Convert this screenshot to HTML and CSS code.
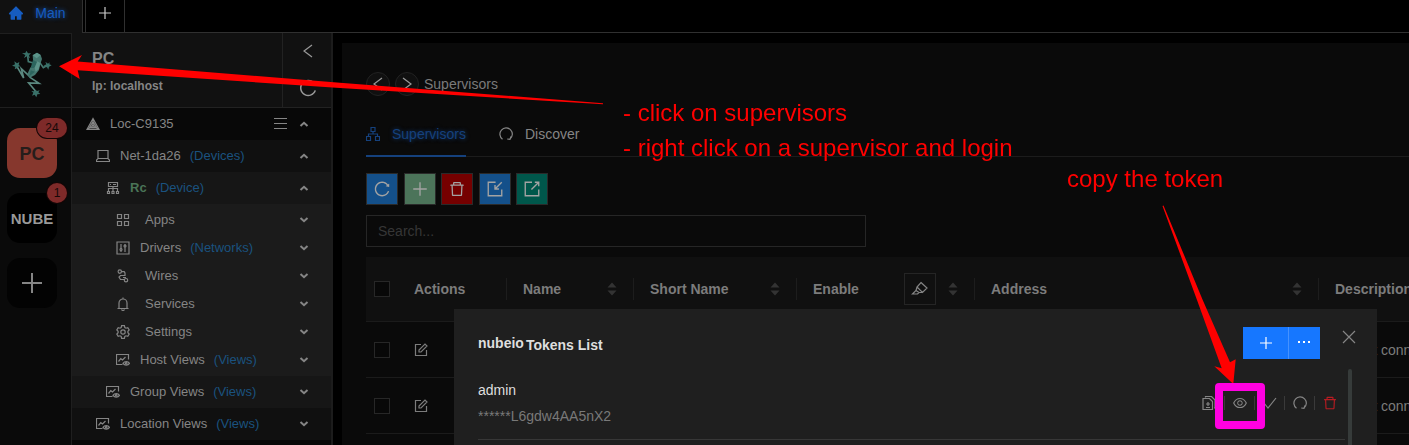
FILE: index.html
```html
<!DOCTYPE html>
<html lang="en">
<head>
<meta charset="utf-8">
<title>Supervisors</title>
<link rel="stylesheet" href="styles.css">
</head>
<body>
<svg class="defs" aria-hidden="true">
  <symbol id="plus" viewBox="0 0 16 16"><path d="M8 2v12M2 8h12"/></symbol>
  <symbol id="left" viewBox="0 0 16 16"><path d="M12 2 4 8l8 6"/></symbol>
  <symbol id="right" viewBox="0 0 16 16"><path d="M4 2l8 6-8 6"/></symbol>
  <symbol id="up" viewBox="0 0 10 10"><path d="M1.500 7 5 3.800 8.500 7"/></symbol>
  <symbol id="down" viewBox="0 0 10 10"><path d="M1.500 3 5 6.200 8.500 3"/></symbol>
  <symbol id="reload" viewBox="0 0 1024 1024"><path class="fill" d="M909.1 209.3l-56.4 44.1C775.8 155.1 656.2 92 521.9 92 290 92 102.3 279.5 102 511.5 101.7 743.7 289.8 932 521.9 932c181.3 0 335.8-115 394.6-276.1 1.5-4.2-.7-8.9-4.9-10.3l-56.7-19.5a8 8 0 0 0-10.1 4.8c-1.8 5-3.8 10-5.9 14.9-17.3 41-42.1 77.8-73.7 109.4A344.77 344.77 0 0 1 655.9 829c-42.3 17.9-87.4 27-133.8 27-46.5 0-91.5-9.1-133.8-27A341.5 341.5 0 0 1 279 755.2a342.16 342.16 0 0 1-73.7-109.4c-17.9-42.4-27-87.4-27-133.9s9.1-91.5 27-133.9c17.3-41 42.1-77.8 73.7-109.4 31.6-31.6 68.4-56.4 109.3-73.8 42.3-17.9 87.4-27 133.8-27 46.5 0 91.5 9.1 133.8 27a341.5 341.5 0 0 1 109.3 73.8c9.9 9.9 19.2 20.4 27.8 31.4l-60.2 47a8 8 0 0 0 3 14.1l175.6 43c5 1.2 9.9-2.6 9.9-7.7l.8-180.9c-.1-6.6-7.8-10.3-13-6.2z"/></symbol>
  <symbol id="redo" viewBox="1 1 14 14"><path d="M4.500 13.200A6.200 6.200 0 1 1 12 13M13 10.400l-1 2.900-2.800-.3"/></symbol>
  <symbol id="trash" viewBox="0 0 1024 1024"><path class="fill" d="M360 184h-8c4.400 0 8-3.600 8-8v8h304v-8c0 4.400 3.600 8 8 8h-8v72h72v-80c0-35.300-28.700-64-64-64H352c-35.300 0-64 28.700-64 64v80h72v-72zm504 72H160c-17.700 0-32 14.300-32 32v32c0 4.400 3.600 8 8 8h60.400l24.700 523c1.600 34.100 29.800 61 63.900 61h454c34.200 0 62.300-26.800 63.900-61l24.700-523H888c4.400 0 8-3.600 8-8v-32c0-17.700-14.300-32-32-32zM731.300 840H292.700l-24.200-512h487l-24.200 512z"/></symbol>
  <symbol id="import" viewBox="0 0 16 16"><path d="M8.500 2H2v12h12V8.500M14 2 8 8M8 4.500V8h3.500"/></symbol>
  <symbol id="export" viewBox="0 0 16 16"><path d="M8 2H2v12h12V8.500M7.500 8.500 14 2M10.500 2H14v3.500"/></symbol>
  <symbol id="edit" viewBox="0 0 14 14"><path d="M7 1.500H1.500v11h11V7M5 9V7l6-6 2 2-6 6z"/></symbol>
  <symbol id="site" viewBox="0 0 14 14"><path d="M7 1.500.900 12.500h12.200zM7 4.500 3.300 11h7.400zM7 7.500 5.500 10h3zM7 1.500v6M1 12.500l4.500-2.500M13 12.500 8.500 10"/></symbol>
  <symbol id="laptop" viewBox="0 0 14 14"><path d="M2 9.500v-8h10v8M2 9.500h10l1.500 1.500v1.500H.500V11z"/></symbol>
  <symbol id="cluster" viewBox="0 0 14 14"><path d="M2.500 1.500h9v4h-9zM4 3.500h1M7 3.500h3M7 5.500V10M2.500 10V7.500h9V10M1.500 10.500h2v2h-2zM6 10.500h2v2H6zM10.500 10.500h2v2h-2z"/></symbol>
  <symbol id="apps" viewBox="0 0 14 14"><path d="M1.500 1.500h4v4h-4zM8.500 1.500h4v4h-4zM1.500 8.500h4v4h-4zM8.500 8.500h4v4h-4z"/></symbol>
  <symbol id="control" viewBox="0 0 14 14"><path d="M1 1h12v12H1zM5 3v5M5 9.500V11M9 3v1.500M9 6v5"/><circle cx="5" cy="8.500" r="1"/><circle cx="9" cy="5" r="1"/></symbol>
  <symbol id="wires" viewBox="0 0 14 14"><circle cx="3.800" cy="2.600" r="1.700"/><circle cx="10" cy="11.200" r="1.700"/><path d="M5.500 2.600h2.700L9 4v2.500H4.500L3 8l1.500 2.500h3.800M7 8.500h3"/></symbol>
  <symbol id="bell" viewBox="0 0 14 14"><path d="M1.500 11.500h11M3 11.500V6a4 4 0 0 1 8 0v5.500M7 .500V2M5.500 12.500c.5 1.300 2.500 1.300 3 0"/></symbol>
  <symbol id="gear" viewBox="0 0 14 14"><path d="M5.600 .700h2.800l.4 1.800 1.200.7 1.800-.6 1.400 2.400L11.900 6.300v1.400l1.300 1.300-1.400 2.400-1.800-.6-1.200.7-.4 1.800H5.600l-.4-1.800-1.200-.7-1.800.6L.800 9l1.300-1.300V6.300L.8 5l1.400-2.400 1.800.6 1.200-.7z"/><circle cx="7" cy="7" r="2.200"/></symbol>
  <symbol id="views" viewBox="0 0 14 14"><path d="M6.500 11.500h-6v-10h12v5M2.500 8.500l2.300-2.800 1.700 1.300L9.500 4M7 10.300c1.500-2.300 5-2.300 6.500 0-1.500 2.300-5 2.300-6.500 0z"/><circle cx="10.200" cy="10.300" r=".8"/></symbol>
  <symbol id="org" viewBox="0 0 14 14"><path d="M5 .500h4v4H5zM.500 9.500h4v4h-4zM9.500 9.500h4v4h-4zM7 4.500V7M2.500 9.500V7h9v2.500"/></symbol>
  <symbol id="sort" viewBox="0 0 10 14"><path class="fill" d="M5 .500 9.500 5.500h-9zM.500 8.500h9L5 13.500z"/></symbol>
  <symbol id="doc" viewBox="0 0 14 14"><path d="M3.500 1.500V.500h6l3.500 3.500V12h-1M1 2.500h6.500L10.500 5.500v8H1zM4 8h4M6 6v4M4 11.500h4"/></symbol>
  <symbol id="eye" viewBox="0 0 1024 1024"><path class="fill" d="M942.200 486.200C847.400 286.500 704.100 186 512 186c-192.200 0-335.400 100.500-430.200 300.300a60.300 60.300 0 0 0 0 51.500C176.600 737.500 319.900 838 512 838c192.200 0 335.400-100.500 430.200-300.300 7.700-16.200 7.700-35 0-51.500zM512 766c-161.300 0-279.400-81.800-362.700-254C232.600 339.800 350.700 258 512 258c161.300 0 279.400 81.800 362.700 254C791.500 684.200 673.400 766 512 766zm-4-430c-97.200 0-176 78.800-176 176s78.800 176 176 176 176-78.800 176-176-78.800-176-176-176zm0 288c-61.900 0-112-50.100-112-112s50.100-112 112-112 112 50.100 112 112-50.100 112-112 112z"/></symbol>
</svg>

<header class="topbar">
  <button class="tab-main"><svg class="i16" viewBox="0 0 1024 1024"><path class="fill" d="M946.500 505L534.600 93.400a31.930 31.930 0 0 0-45.200 0L77.500 505c-12 12-18.800 28.300-18.800 45.300 0 35.300 28.700 64 64 64h43.400V908c0 17.700 14.300 32 32 32H448V716h112v224h265.900c17.700 0 32-14.300 32-32V614.300h43.400c17 0 33.300-6.700 45.300-18.800 24.900-25 24.900-65.500-.1-90.500z"/></svg><span>Main</span></button>
  <span class="topgap"></span>
  <button class="tab-add" aria-label="Add tab"><svg class="i16"><use href="#plus"/></svg></button>
  <span class="toprest"></span>
</header>

<div class="shell">
  <nav class="rail">
    <a class="logo" href="#" aria-label="Home">
      <svg class="frog" viewBox="36 150 120 144">
        <path fill="none" stroke="#44776f" stroke-width="5" d="M100 189 85 185 83 166M118 186l12 17 12-7"/>
        <path fill="none" stroke="#5b8980" stroke-width="5" d="M92 232 64 206l7 28-20-34M90 232l27 18-31-1 23 27"/>
        <path fill="#44776f" d="M98 166l13-8 11 7 4 12-5 15-4 18-12 15-17 9-6-12 8-17 10-14z"/>
        <path fill="#5c948a" d="M98 166l13-8 11 7-12 10z"/>
        <path fill="#2c655e" d="M99 179l12 8-8 17-11 0zM92 211l13 4-17 14z"/>
        <path fill="#5c948a" d="M112 184l9 5-5 18-9 8-3-12z"/>
        <path fill="#397068" d="M81 169l-9 5 4-9-10-5 10-1 3-7 5 8 9 0-6 6 3 9zM137 201l-7-3 9-5-3-8 8 6 5-4-1 6 7 3-8 4-2 9-4-7zM51 205l-7 3 2-8-10-3 9-4-2-9 8 6 7-4-2 9 6 4-7 1zM105 270l6 3 8-2-4 6 6 5-9 1-3 9-5-8-8 3 4-9-6-5 8 1z"/>
      </svg>
    </a>
    <div class="hosts">
      <a class="host pc" href="#">PC<span class="badge wide">24</span></a>
      <a class="host nube" href="#">NUBE<span class="badge">1</span></a>
      <button class="host add" aria-label="Add host"><svg class="i24" viewBox="0 0 24 24"><path d="M12 2v20M2 12h20"/></svg></button>
    </div>
  </nav>

  <aside class="panel">
    <div class="panel-head">
      <div class="panel-title"><strong>PC</strong><span>Ip: localhost</span></div>
      <div class="panel-tools">
        <button aria-label="Collapse"><svg class="i16"><use href="#left"/></svg></button>
        <button aria-label="Reload"><svg class="i20"><use href="#reload"/></svg></button>
      </div>
    </div>
    <ul class="tree">
      <li class="row l0"><svg class="i14"><use href="#site"/></svg><span>Loc-C9135</span><button class="menu" aria-label="Menu"><svg class="i14" viewBox="0 0 14 14"><path d="M0 1.500h13M0 6.500h13M0 11.500h13"/></svg></button><button class="chev" aria-label="Collapse"><svg><use href="#up"/></svg></button></li>
      <li class="row l1"><svg class="i14"><use href="#laptop"/></svg><span>Net-1da26</span><em>(Devices)</em><button class="chev" aria-label="Collapse"><svg><use href="#up"/></svg></button></li>
      <li class="row l2"><svg class="i14"><use href="#cluster"/></svg><b>Rc</b><em>(Device)</em><button class="chev" aria-label="Collapse"><svg><use href="#up"/></svg></button></li>
      <li class="branch"><ul>
        <li class="row l3 item"><svg class="i14"><use href="#apps"/></svg><span>Apps</span><button class="chev" aria-label="Expand"><svg><use href="#down"/></svg></button></li>
        <li class="row l3"><svg class="i14"><use href="#control"/></svg><span>Drivers</span><em>(Networks)</em><button class="chev" aria-label="Expand"><svg><use href="#down"/></svg></button></li>
        <li class="row l3 item"><svg class="i14"><use href="#wires"/></svg><span>Wires</span><button class="chev" aria-label="Expand"><svg><use href="#down"/></svg></button></li>
        <li class="row l3 item"><svg class="i14"><use href="#bell"/></svg><span>Services</span><button class="chev" aria-label="Expand"><svg><use href="#down"/></svg></button></li>
        <li class="row l3 item"><svg class="i14"><use href="#gear"/></svg><span>Settings</span><button class="chev" aria-label="Expand"><svg><use href="#down"/></svg></button></li>
        <li class="row l3"><svg class="i14"><use href="#views"/></svg><span>Host Views</span><em>(Views)</em><button class="chev" aria-label="Expand"><svg><use href="#down"/></svg></button></li>
      </ul></li>
      <li class="row l2"><svg class="i14"><use href="#views"/></svg><span>Group Views</span><em>(Views)</em><button class="chev" aria-label="Expand"><svg><use href="#down"/></svg></button></li>
      <li class="row l1"><svg class="i14"><use href="#views"/></svg><span>Location Views</span><em>(Views)</em><button class="chev" aria-label="Expand"><svg><use href="#down"/></svg></button></li>
    </ul>
  </aside>

  <main class="content">
    <div class="crumbs">
      <button aria-label="Back"><svg class="i16"><use href="#left"/></svg></button>
      <button aria-label="Forward"><svg class="i16"><use href="#right"/></svg></button>
      <span>Supervisors</span>
    </div>
    <div class="tabs">
      <button class="active"><svg class="i14"><use href="#org"/></svg><span>Supervisors</span></button>
      <button><svg class="i14"><use href="#redo"/></svg><span>Discover</span></button>
    </div>
    <div class="actions">
      <button class="blue" aria-label="Refresh"><svg class="i18"><use href="#reload"/></svg></button>
      <button class="green" aria-label="Add"><svg class="i18"><use href="#plus"/></svg></button>
      <button class="red" aria-label="Delete"><svg class="i18"><use href="#trash"/></svg></button>
      <button class="blue" aria-label="Import"><svg class="i18"><use href="#import"/></svg></button>
      <button class="teal" aria-label="Export"><svg class="i18"><use href="#export"/></svg></button>
    </div>
    <input class="search" type="text" placeholder="Search..." aria-label="Search">
    <div class="table-wrap">
      <table>
        <colgroup><col class="c-check"><col class="c-act"><col class="c-name"><col class="c-short"><col class="c-enable"><col class="c-addr"><col class="c-desc"></colgroup>
        <thead><tr>
          <th class="check"><input type="checkbox" aria-label="Select all"></th>
          <th class="split">Actions</th>
          <th class="split"><div class="th">Name<svg class="sort"><use href="#sort"/></svg></div></th>
          <th class="split"><div class="th">Short Name<svg class="sort"><use href="#sort"/></svg></div></th>
          <th class="split"><div class="th">Enable<button class="filter" aria-label="Highlight"><svg class="i18" viewBox="0 0 18 18"><path d="M10 2.500l6 5.500-4.500 4.500-5.500-5.500zM6 7 5 10.500l-3.500 3.500h5l1.500-1.500 3.500 0M5 10.500l3 2"/></svg></button><svg class="sort"><use href="#sort"/></svg></div></th>
          <th class="split"><div class="th">Address<svg class="sort"><use href="#sort"/></svg></div></th>
          <th>Description</th>
        </tr></thead>
        <tbody>
          <tr><td class="check"><input type="checkbox" aria-label="Select row 1"></td><td><button class="edit" aria-label="Edit"><svg class="i14"><use href="#edit"/></svg></button></td><td></td><td></td><td></td><td></td><td>cannot connect</td></tr>
          <tr><td class="check"><input type="checkbox" aria-label="Select row 2"></td><td><button class="edit" aria-label="Edit"><svg class="i14"><use href="#edit"/></svg></button></td><td></td><td></td><td></td><td></td><td>cannot connect</td></tr>
        </tbody>
      </table>
    </div>
  </main>
</div>

<section class="modal" role="dialog" aria-label="Tokens List">
  <div class="modal-head">
    <h2><span>nubeio</span><span class="sub">Tokens List</span></h2>
    <div class="split-btn">
      <button aria-label="Add token"><svg class="i16"><use href="#plus"/></svg></button>
      <button class="more" aria-label="More"><svg class="i14" viewBox="0 0 14 14"><path class="fill" d="M1 6h2v2H1zM6 6h2v2H6zM11 6h2v2h-2z"/></svg></button>
    </div>
    <button class="close" aria-label="Close"><svg class="i16" viewBox="0 0 16 16"><path d="M2 2l12 12M14 2 2 14"/></svg></button>
  </div>
  <div class="modal-body">
    <div class="token">
      <div class="token-text"><span>admin</span><span class="value">******L6gdw4AA5nX2</span></div>
      <div class="token-actions">
        <button aria-label="Copy"><svg class="i14"><use href="#doc"/></svg></button>
        <button aria-label="Show"><svg class="i16"><use href="#eye"/></svg></button>
        <button aria-label="Approve"><svg class="i14" viewBox="0 0 14 14"><path d="M1 7l4 5 8-10"/></svg></button>
        <button aria-label="Regenerate"><svg class="i14"><use href="#redo"/></svg></button>
        <button class="danger" aria-label="Delete"><svg class="i16"><use href="#trash"/></svg></button>
      </div>
    </div>
    <span class="scrollbar"></span>
  </div>
</section>

<div class="notes">
  <svg class="arrows" width="1409" height="445">
    <path d="M59 66.300 82 55 77.700 61.500 340 82.700 603 103.300v1L340 88 77.700 70.300 79.700 79z"/>
    <path d="M1162.500 206 1163.500 205.500 1202.700 300 1230 362.300 1235.700 359.300 1233.300 384 1214.300 366.300 1221.700 368.300 1197 300z"/>
  </svg>
  <p class="note steps">- click on supervisors<br>- right click on a supervisor and login</p>
  <p class="note copy">copy the token</p>
  <span class="frame"></span>
</div>
</body>
</html>
```
FILE: styles.css
```css
* { box-sizing: border-box; }
body {
  margin: 0;
  height: 100vh;
  overflow: hidden;
  display: flex;
  flex-direction: column;
  background: #000;
  color: #858585;
  font-family: "Liberation Sans", Arial, sans-serif;
  font-size: 14px;
  line-height: 22px;
}
button {
  display: flex;
  align-items: center;
  justify-content: center;
  margin: 0;
  padding: 0;
  border: 0;
  background: none;
  color: inherit;
  font: inherit;
}
a { color: inherit; text-decoration: none; }
ul { list-style: none; margin: 0; padding: 0; }
svg { display: block; flex: none; fill: none; stroke: currentColor; stroke-width: 1.2; }
.fill { fill: currentColor; stroke: none; }
.defs { position: absolute; width: 0; height: 0; }
.i14 { width: 14px; height: 14px; }
.i16 { width: 16px; height: 16px; }
.i18 { width: 18px; height: 18px; }
.i20 { width: 20px; height: 20px; }
.i24 { width: 24px; height: 24px; stroke-width: 2; }

.topbar { display: flex; flex: none; height: 33px; }
.tab-main {
  width: 83px;
  padding: 0 8px 7px 0;
  gap: 11px;
  background: #111;
  border-right: 1px solid #303030;
  color: #165cc0;
  text-shadow: 0 0 4px #1557b8;
}
.topgap { width: 2px; border-bottom: 1px solid #303030; }
.tab-add {
  width: 40px;
  padding-bottom: 6px;
  border: solid #303030;
  border-width: 0 1px 1px;
  color: #ccc;
}
.toprest { flex: 1; border-bottom: 1px solid #303030; }

.shell { display: flex; flex: 1; min-height: 0; }
.rail { width: 72px; flex: none; background: #0a0a0a; border-right: 1px solid #1f1f1f; }
.logo { display: block; height: 75px; padding: 16px 0 0 12px; border-top: 1px solid #1f1f1f; border-bottom: 1px solid #1f1f1f; }
.frog { width: 40px; height: 48px; stroke: none; }
.hosts { display: flex; flex-direction: column; gap: 15px; padding: 20px 0 0 7px; }
.host {
  position: relative;
  display: flex;
  align-items: center;
  justify-content: center;
  width: 50px;
  height: 50px;
  border-radius: 13px;
  background: #000;
  font-weight: bold;
}
.host.pc { padding-top: 2px; background: #86372d; color: #261d1b; font-size: 18px; }
.host.nube { padding-top: 2px; font-size: 15px; color: #999; }
.host.add { background: #030303; }
.badge {
  position: absolute;
  top: -10px;
  right: -10px;
  min-width: 20px;
  height: 20px;
  border-radius: 10px;
  background: #7e2a29;
  box-shadow: 0 0 0 1px #130606;
  color: #160808;
  font-size: 12px;
  font-weight: normal;
  line-height: 20px;
  text-align: center;
}
.badge.wide { min-width: 30px; }

.panel { width: 261px; flex: none; background: #070707; border-right: 2px solid #1c1c1c; }
.panel-head { display: flex; height: 75px; background: #111; border-bottom: 1px solid #222; }
.panel-title { flex: 1; padding: 15px 0 0 20px; border-right: 1px solid #222; }
.panel-title strong { display: block; font-size: 16px; line-height: 22px; }
.panel-title span { display: block; padding-top: 5px; font-size: 12px; font-weight: bold; }
.panel-tools { display: flex; flex-direction: column; align-items: center; gap: 19px; width: 48px; padding: 10px 0 0 1px; color: #999; }
.row { display: flex; align-items: center; height: 32px; padding-right: 22px; font-size: 13px; }
.row > .i14 { margin-right: 10px; }
.row em { margin-left: 9px; color: #1a527f; font-style: normal; }
.row b { color: #4a7457; }
.row .chev { margin-left: auto; }
.row .menu { margin-left: auto; }
.row .menu + .chev { margin-left: 11px; }
.chev svg { width: 10px; height: 10px; stroke-width: 2; }
.l0 { padding-left: 14px; background: #080808; }
.l1 { padding-left: 24px; background: #101010; }
.l2 { padding-left: 34px; background: #161616; }
.l3 { padding-left: 44px; height: 28px; }
.row.item > .i14 { margin-right: 15px; }
.branch { padding: 2px 0; background: #1b1b1b; }

.content { flex: 1; min-width: 0; margin: 10px 0 0 9px; padding: 29px 0 0 24px; background: #0a0a0a; overflow: hidden; }
.crumbs { display: flex; align-items: center; gap: 5px; height: 24px; color: #7a7a7a; }
.crumbs button { width: 24px; height: 24px; border: 1px solid #222; border-radius: 12px; background: #101010; color: #999; }
.tabs { display: flex; gap: 33px; height: 61px; padding-top: 17px; border-bottom: 1px solid #1c1c1c; color: #858585; }
.tabs button { height: 44px; gap: 12px; border-bottom: 2px solid transparent; }
.tabs .active { color: #15417d; border-color: #15417d; text-shadow: 0 0 4px #153f77; }
.actions { display: flex; justify-content: space-between; width: 182px; margin-top: 16px; }
.actions button { width: 32px; height: 32px; border: 1px solid #2a2a2a; color: #a3a3a3; }
.actions .blue { background: #14508a; }
.actions .green { background: #4c745a; }
.actions .red { background: #750000; }
.actions .teal { background: #00574b; }
.search {
  display: block;
  width: 500px;
  height: 32px;
  margin-top: 10px;
  padding: 0 11px;
  border: 1px solid #262626;
  border-radius: 0;
  background: #0a0a0a;
  color: #858585;
  font: inherit;
}
.search::placeholder { color: #363636; }
.table-wrap { margin-top: 10px; overflow: hidden; }
table { width: 1253px; table-layout: fixed; border-collapse: separate; border-spacing: 0; }
.c-check { width: 32px; }
.c-act { width: 109px; }
.c-name { width: 127px; }
.c-short { width: 163px; }
.c-enable { width: 178px; }
.c-addr { width: 344px; }
th, td { padding: 0 17px 0 16px; border-bottom: 1px solid #1b1b1b; text-align: left; white-space: nowrap; }
th { height: 65px; background: #101010; color: #7c7c7c; }
th.split { background: linear-gradient(#1d1d1d, #1d1d1d) right center / 1px 22px no-repeat #101010; }
td { height: 56px; color: #7c7c7c; }
.check { padding: 0 8px; }
.check input { display: block; appearance: none; width: 16px; height: 16px; margin: 0; border: 1px solid #272727; background: #080808; }
.th { display: flex; align-items: center; }
.sort { width: 10px; height: 14px; margin-left: auto; color: #333; }
.filter { width: 32px; height: 32px; margin-left: auto; border: 1px solid #252525; color: #858585; }
.filter + .sort { margin-left: 12px; }

.modal {
  position: fixed;
  top: 309px;
  bottom: 0;
  left: 454px;
  right: 32px;
  padding: 18px 20px 0 24px;
  background: #1f1f1f;
  overflow: hidden;
}
.modal-head { display: flex; height: 42px; }
.modal h2 { display: flex; flex: 1; gap: 2px; margin: 0; padding-top: 5px; color: #dedede; font-size: 14px; }
.modal h2 .sub { padding-top: 2px; }
.split-btn { display: flex; height: 32px; background: #1677ff; color: #fff; }
.split-btn button { width: 45px; }
.split-btn .more { width: 32px; padding: 0 2px 2px 0; border-left: 1px solid #4592ff; }
.close { width: 16px; height: 20px; margin-left: 21px; color: #858585; }
.modal-body { display: flex; gap: 3px; height: 400px; padding-right: 5px; }
.token { display: flex; flex: 1; justify-content: space-between; height: 71px; border-bottom: 1px solid #373737; }
.token-text { display: flex; flex-direction: column; gap: 4px; padding-top: 10px; color: #dedede; }
.token-text .value { color: #797979; }
.token-actions { display: flex; padding: 27px 1px 0 0; color: #858585; }
.token-actions button { width: 30px; height: 14px; }
.token-actions button + button { border-left: 1px solid #3a3a3a; }
.token-actions .danger { color: #b81c22; }
.scrollbar { width: 4px; border-radius: 2px; background: #363b3a; }

.notes { position: absolute; inset: 0; overflow: hidden; pointer-events: none; }
.arrows { position: absolute; top: 0; left: 0; fill: #f00; stroke: none; }
.note { position: absolute; margin: 0; color: #f00; font-size: 24px; line-height: 35px; white-space: nowrap; }
.steps { top: 95px; left: 623px; }
.copy { top: 161px; left: 1067px; }
.frame { position: absolute; top: 383px; left: 1215px; width: 50px; height: 46px; border: 8px solid #ff00e1; border-radius: 4px; }
```
